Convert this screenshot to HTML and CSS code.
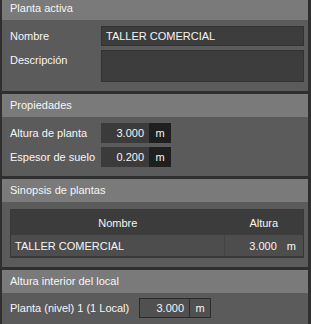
FILE: index.html
```html
<!DOCTYPE html>
<html lang="es">
<head>
  <meta charset="UTF-8">
  <title>Planta activa</title>
  <link rel="stylesheet" href="styles.css">
</head>
<body>
  <div class="panel">
    <section class="group">
      <div class="group-title">Planta activa</div>
      <div class="group-body">
        <div class="field">
          <label>Nombre</label>
          <div class="text-input">TALLER COMERCIAL</div>
        </div>
        <div class="field">
          <label>Descripción</label>
          <div class="text-input text-area"></div>
        </div>
      </div>
    </section>

    <section class="group">
      <div class="group-title">Propiedades</div>
      <div class="group-body">
        <div class="field">
          <label>Altura de planta</label>
          <div class="num-input">
            <span class="num-value">3.000</span>
            <span class="num-unit">m</span>
          </div>
        </div>
        <div class="field">
          <label>Espesor de suelo</label>
          <div class="num-input">
            <span class="num-value">0.200</span>
            <span class="num-unit">m</span>
          </div>
        </div>
      </div>
    </section>

    <section class="group">
      <div class="group-title">Sinopsis de plantas</div>
      <div class="group-body table-body">
        <table class="floors">
          <thead>
            <tr><th class="col-name">Nombre</th><th class="col-height">Altura</th></tr>
          </thead>
          <tbody>
            <tr>
              <td class="col-name">TALLER COMERCIAL</td>
              <td class="col-height"><span class="cell-value">3.000</span><span class="cell-unit">m</span></td>
            </tr>
          </tbody>
        </table>
      </div>
    </section>

    <section class="group">
      <div class="group-title">Altura interior del local</div>
      <div class="group-body local-body">
        <div class="field field-wide">
          <label>Planta (nivel) 1 (1 Local)</label>
          <div class="num-input num-input-flat">
            <span class="num-value">3.000</span>
            <span class="num-unit">m</span>
          </div>
        </div>
      </div>
    </section>
  </div>
</body>
</html>
```

FILE: styles.css
```css
:root {
  --frame-color: #2f2f2f;
  --title-color: #7a7a7a;
  --body-color: #5b5b5b;
  --input-color: #3d3d3d;
  --text-color: #f6f6f6;
}

body {
  margin: 0;
  background-color: var(--frame-color);
  font-family: 'Liberation Sans', Arial, sans-serif;
  font-size: 11px;
  color: var(--text-color);
  overflow: hidden;
}

.panel {
  margin-top: -3px;
  padding: 0 3px 0 2px;
  display: flex;
  flex-direction: column;
  gap: 3px;
}

.group-title {
  height: 23px;
  line-height: 23px;
  padding-left: 8px;
  background-color: var(--title-color);
}

.group-body {
  background-color: var(--body-color);
  padding: 6px 4px 9px 8px;
  display: flex;
  flex-direction: column;
  gap: 5px;
}

.field {
  display: grid;
  grid-template-columns: 91px 1fr;
  align-items: start;
}

.field label {
  line-height: 20px;
}

.text-input {
  height: 18px;
  line-height: 18px;
  padding: 0 4px;
  background-color: var(--input-color);
  border: 1px solid #323232;
}

.text-area {
  height: 30px;
}

.group-body .field + .field {
  margin-top: -1px;
}

.num-input {
  display: flex;
  width: 70px;
  height: 20px;
  line-height: 20px;
}

.num-value {
  flex: 1;
  text-align: right;
  padding-right: 5px;
  background-color: #3b3b3b;
}

.num-unit {
  width: 22px;
  text-align: center;
  background-color: #1f1f1f;
}

/* table */
.table-body {
  padding-top: 7px;
}

.floors {
  width: 100%;
  border-collapse: collapse;
  border: 1px solid #383838;
  border-bottom-width: 2px;
}

.floors th {
  height: 25px;
  padding: 0;
  font-weight: normal;
  background-color: #3c3c3c;
}

.floors td {
  height: 21px;
  padding: 0;
  background-color: #4d4d4d;
}

.floors td.col-name {
  padding-left: 4px;
}

.floors .col-height {
  width: 71px;
}

.floors td.col-height {
  border-left: 1px solid #444;
  text-align: right;
  padding-right: 7px;
}

.cell-unit {
  margin-left: 10px;
}

/* last group */
.local-body {
  padding: 5px 4px 8px 8px;
}

.field-wide {
  grid-template-columns: 129px 1fr;
}

.num-input-flat {
  height: 18px;
  line-height: 18px;
  border: 1px solid #2c2c2c;
}

.num-input-flat .num-value {
  background-color: #505050;
  border-right: 1px solid #2c2c2c;
}

.num-input-flat .num-unit {
  width: 20px;
  background-color: #505050;
}
```
